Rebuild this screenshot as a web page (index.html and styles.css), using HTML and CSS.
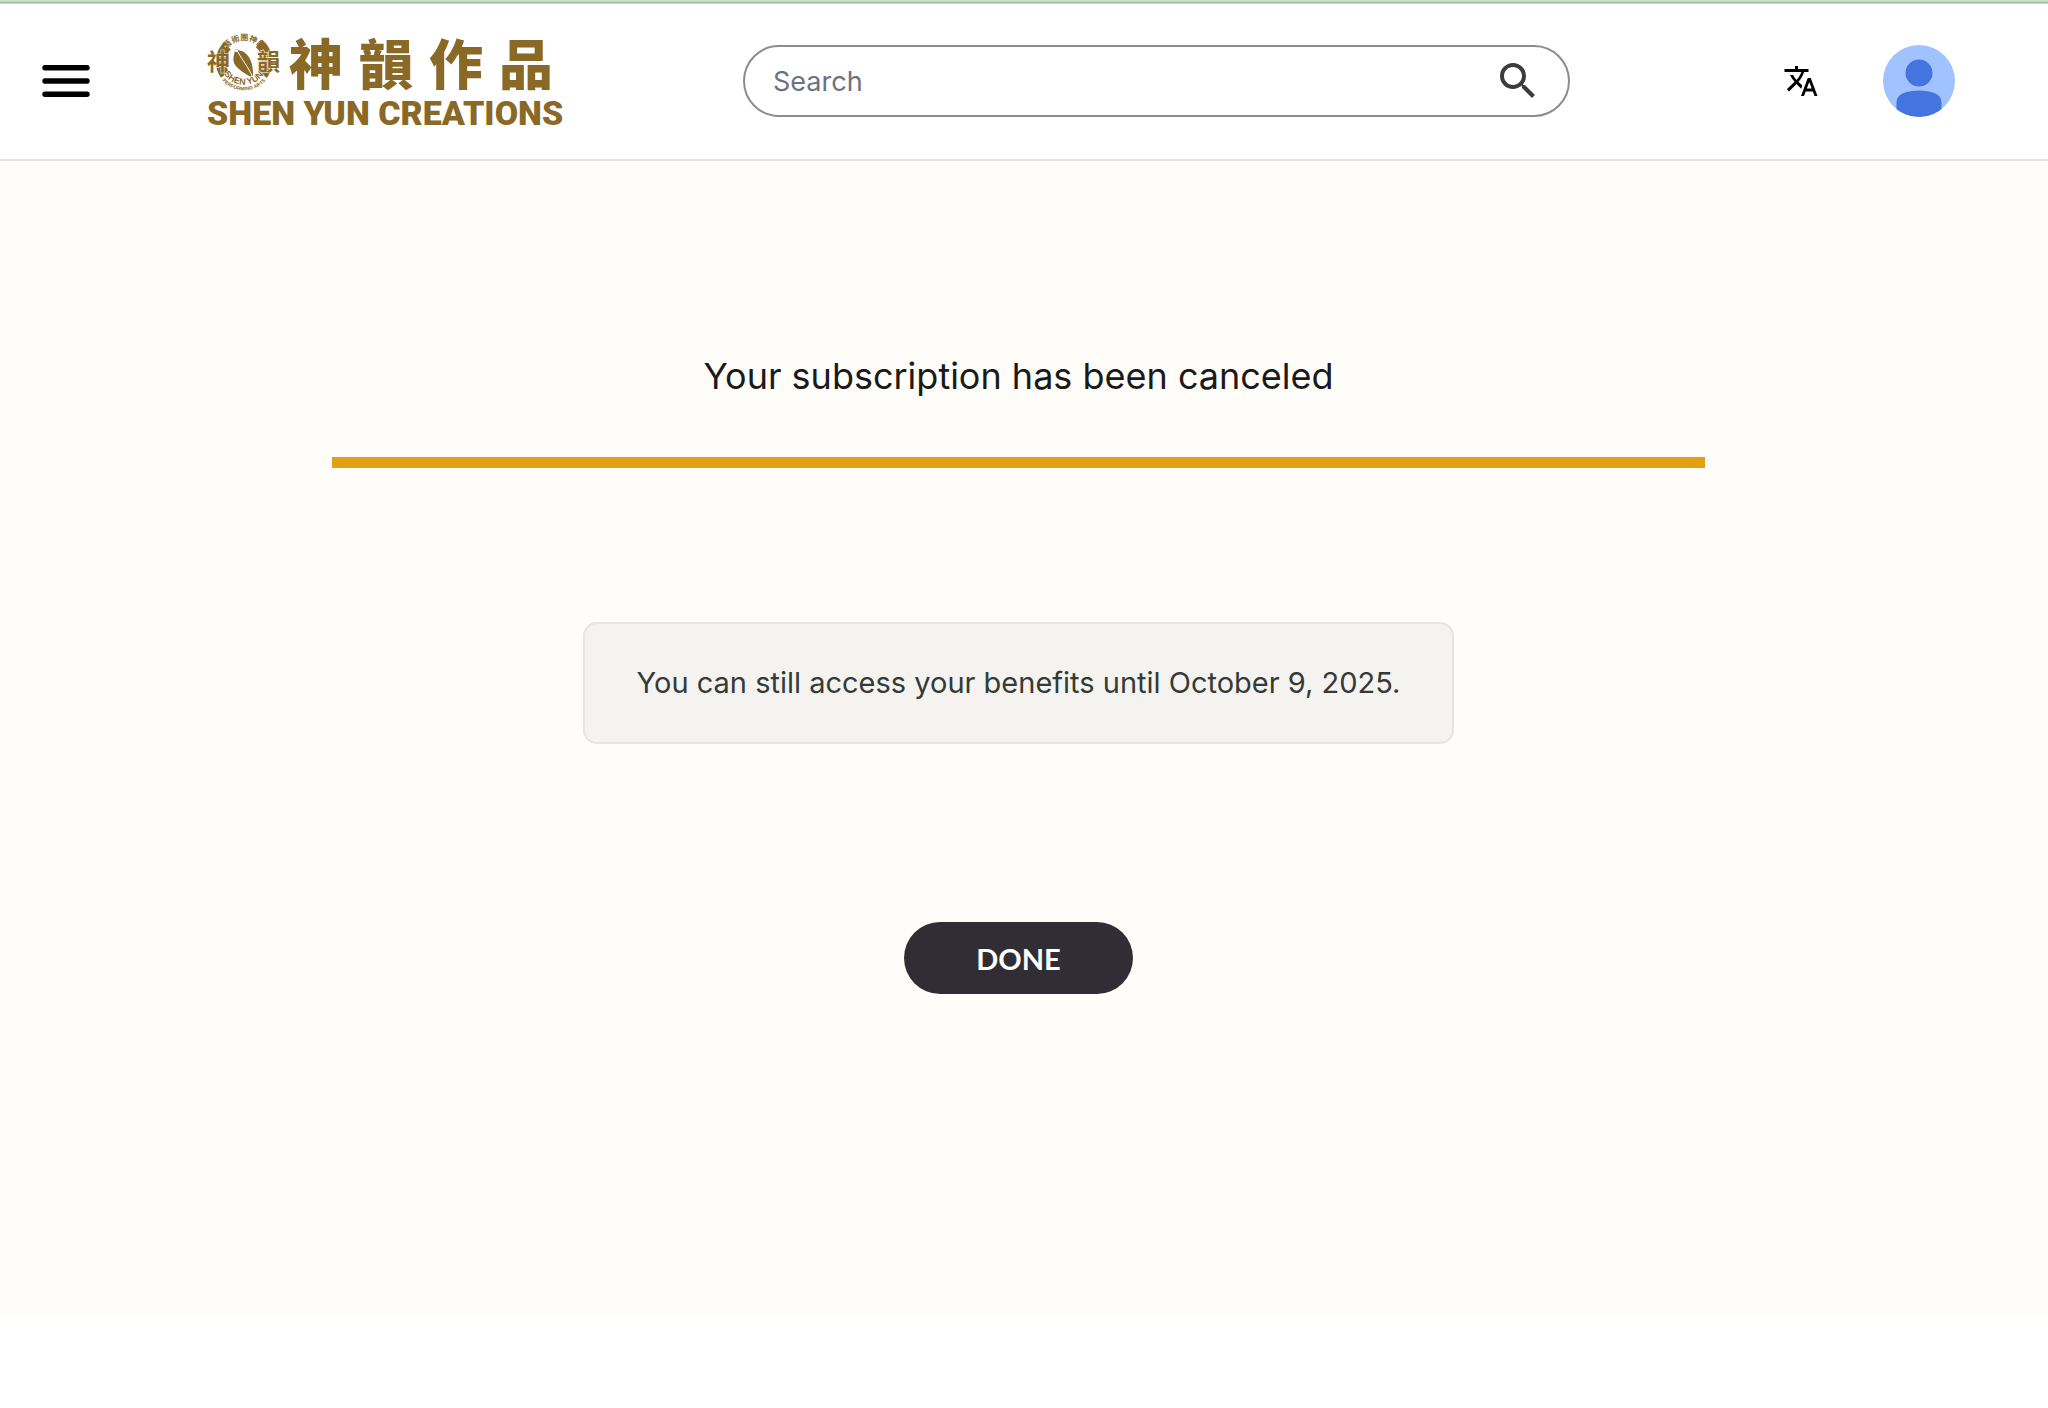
FILE: index.html
```
<!DOCTYPE html>
<html lang="en">
<head>
  <meta charset="UTF-8">
  <meta name="viewport" content="width=device-width, initial-scale=1.0">
  <title>Shen Yun Creations</title>
  <link rel="stylesheet" href="styles.css">
</head>
<body>
  <div class="top-strip"></div>

  <!-- Header -->
  <header class="header">
    <button type="button" class="icon-button menu-button" aria-label="Menu">
      <svg width="48" height="34" viewBox="0 0 48 34" stroke="#000" stroke-width="5.4" stroke-linecap="round">
        <path d="M3 3.7h42M3 17h42M3 30.3h42"/>
      </svg>
    </button>

    <a href="#" class="logo">
      <span class="logo-top">
        <svg class="emblem" width="74" height="60" viewBox="0 0 74 60" aria-hidden="true">
          <defs>
            <path id="arc-top" d="M20 17A21 21 0 0 1 54 17"/>
            <path id="arc-name" d="M17 42A24 24 0 0 0 57 42"/>
            <path id="arc-arts" d="M14 47A29 29 0 0 0 60 47"/>
          </defs>
          <g fill="none" stroke="currentColor" stroke-width="10">
            <path d="M21 13A23.500 23.500 0 0 0 18 43"/>
            <path d="M52 11.500A23.500 23.500 0 0 1 56 43"/>
          </g>
          <path d="M27 18C29 16 31 19 35 19C42 22 47 31 46 46C37 41 30 37 27 31C25 24 29 21 27 18Z" fill="currentColor"/>
          <path d="M18 15C21 10 24 20 31 19" fill="none" stroke="#fff" stroke-width="2"/>
          <path d="M31 20C35 28 41 34 46 46" fill="none" stroke="#fff" stroke-width="1"/>
          <g class="emblem-text">
            <text font-size="8"><textPath href="#arc-top">藝術團神韻</textPath></text>
            <text class="outlined" x="0" y="38" font-size="23">神</text>
            <text class="outlined" x="50" y="38" font-size="23">韻</text>
            <text class="outlined" font-size="9"><textPath href="#arc-name">SHEN YUN</textPath></text>
            <text font-size="5"><textPath href="#arc-arts" startOffset="2">PERFORMING ARTS</textPath></text>
          </g>
        </svg>
        <span class="logo-chinese" lang="zh-Hant">
          <span>神</span><span>韻</span><span>作</span><span>品</span>
        </span>
      </span>
      <span class="logo-name">SHEN YUN CREATIONS</span>
    </a>

    <form class="search" role="search">
      <input type="search" name="q" placeholder="Search" aria-label="Search">
      <button type="submit" class="icon-button" aria-label="Search">
        <svg width="48" height="48" viewBox="0 0 24 24" fill="#3c3c3c">
          <path d="M15.5 14h-.79l-.28-.27A6.471 6.471 0 0 0 16 9.500 6.500 6.500 0 1 0 9.500 16c1.610 0 3.090-.59 4.230-1.570l.27.28v.79l5 4.990L20.490 19l-4.990-5zm-6 0C7.010 14 5 11.990 5 9.500S7.010 5 9.500 5 14 7.010 14 9.500 11.990 14 9.500 14z"/>
        </svg>
      </button>
    </form>

    <button type="button" class="icon-button" aria-label="Language">
      <svg width="36" height="36" viewBox="0 0 24 24">
        <path d="M12.870 15.070l-2.540-2.510.03-.03c1.740-1.940 2.980-4.170 3.710-6.530H17V4h-7V2H8v2H1v1.990h11.170C11.500 7.920 10.440 9.750 9 11.350 8.070 10.320 7.300 9.190 6.690 8h-2c.73 1.630 1.730 3.170 2.980 4.560l-5.090 5.020L4 19l5-5 3.110 3.110.76-2.040zM18.500 10h-2L12 22h2l1.120-3h4.750L21 22h2l-4.500-12zm-2.620 7l1.620-4.330L19.120 17h-3.240z"/>
      </svg>
    </button>

    <button type="button" class="icon-button avatar" aria-label="Account">
      <svg width="72" height="72" viewBox="0 0 72 72">
        <rect width="72" height="72" fill="#a0c3ff"/>
        <circle cx="36" cy="28" r="13.500" fill="#4374e0"/>
        <path d="M13.500 72V57C13.500 49 24 45.500 36 45.500S58.500 49 58.500 57V72Z" fill="#4374e0"/>
      </svg>
    </button>
  </header>

  <!-- Cancel confirmation -->
  <main class="main">
    <h1>Your subscription has been canceled</h1>
    <hr class="divider">
    <p class="notice">You can still access your benefits until October 9, 2025.</p>
    <button type="button" class="done-button">DONE</button>
  </main>
</body>
</html>
```
FILE: styles.css
```
* {
  box-sizing: border-box;
}
body {
  margin: 0;
  background-color: #fff;
  font-family: Inter, sans-serif;
}
.top-strip {
  height: 4px;
  background-color: #9dbb9f;
  border-top: 2px solid #c3dfc5;
  border-bottom: 1px solid #c3dfc5;
}

/* Header */
.header {
  display: flex;
  align-items: center;
  height: 157px;
  padding: 0 93px 1px 42px;
  border-bottom: 2px solid #e5e5e5;
}
.icon-button {
  display: flex;
  padding: 0;
  border: none;
  background: none;
  cursor: pointer;
}
.menu-button {
  margin-right: 117px;
}
.logo {
  display: flex;
  flex-direction: column;
  flex-shrink: 0;
  width: 358px;
  color: #8a6926;
  text-decoration: none;
  white-space: nowrap;
}
.logo-top {
  display: flex;
  align-items: center;
  gap: 8px;
}
.emblem {
  overflow: visible;
}
.emblem-text {
  fill: currentColor;
  font-family: "Liberation Sans", "Noto Sans CJK TC", sans-serif;
  font-weight: bold;
}
.outlined {
  stroke: #fff;
  stroke-width: 1px;
  paint-order: stroke;
}
.logo-chinese {
  display: flex;
  gap: 16px;
  font-family: "Noto Sans CJK TC", sans-serif;
  font-size: 54px;
  font-weight: 900;
  line-height: 54px;
}
.logo-name {
  margin-top: 4px;
  font-family: Roboto, sans-serif;
  font-size: 34px;
  font-weight: 900;
  line-height: 34px;
}
.search {
  display: flex;
  flex: 1;
  align-items: center;
  height: 72px;
  margin: 0 213px 0 178px;
  padding: 0 26px 0 28px;
  border: 2px solid #8c8c8c;
  border-radius: 36px;
}
.search input {
  flex: 1;
  min-width: 0;
  padding: 0;
  border: none;
  outline: none;
  background: none;
  color: #333;
  font-family: Inter, sans-serif;
  font-size: 27px;
}
.search input::placeholder {
  color: #6b7280;
}
.avatar {
  margin-left: 64px;
  border-radius: 50%;
  overflow: hidden;
}

/* Cancel confirmation */
.main {
  display: flex;
  flex-direction: column;
  align-items: center;
  padding: 191px 11px 321px 0;
  background-color: #fffdf9;
}
h1 {
  margin: 0;
  color: #1a1a1a;
  font-size: 36px;
  font-weight: normal;
  line-height: 48px;
}
.divider {
  width: 1373px;
  max-width: 90%;
  height: 11px;
  margin: 57px 0 154px;
  border: none;
  background-color: #e3a010;
}
.notice {
  margin: 0;
  padding: 38px 52px;
  border: 2px solid #e5e5e5;
  border-radius: 14px;
  background-color: #f5f3f0;
  color: #343a37;
  font-size: 29px;
  line-height: 42px;
}
.done-button {
  height: 72px;
  margin-top: 178px;
  padding: 0 72px;
  border: none;
  border-radius: 36px;
  background-color: #302e34;
  color: #fff;
  font-family: Lato, sans-serif;
  font-size: 29px;
  font-weight: bold;
  cursor: pointer;
}
```
